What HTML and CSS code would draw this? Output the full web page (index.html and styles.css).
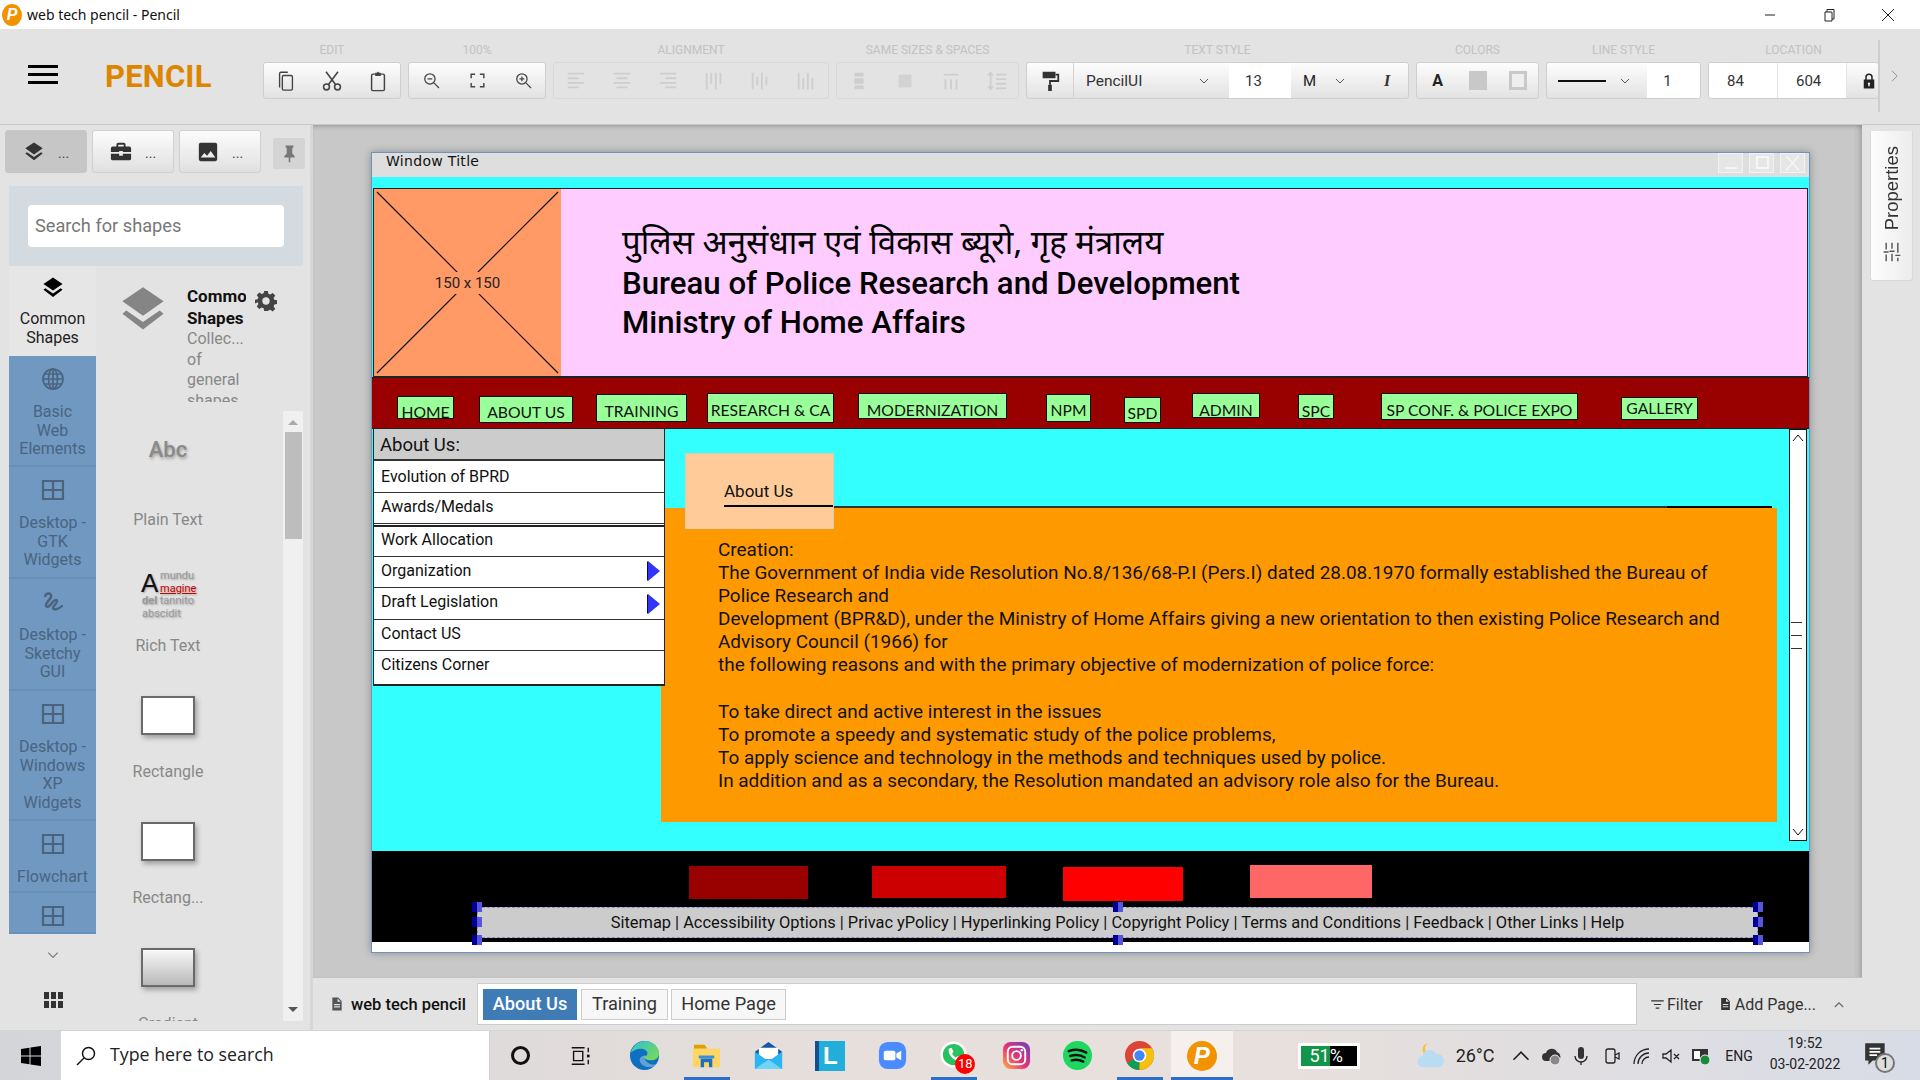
FILE: index.html
```html
<!DOCTYPE html>
<html>
<head>
    <title>web tech pencil - Pencil</title>
    <meta charset="utf-8">
    <link rel="stylesheet" href="styles.css">
</head>
<body>
<svg class="defs" width="0" height="0">
    <symbol id="i-layers" viewBox="0 0 24 24"><path d="M12 14.6 2.5 8 12 1.5 21.5 8z"/><path d="M12 17.5 4.3 12.2 2.5 13.7 12 21 21.5 13.700 19.7 12.2z"/></symbol>
    <symbol id="i-case" viewBox="0 0 24 24"><path d="M9 2h6a2 2 0 0 1 2 2v2h4a2 2 0 0 1 2 2v4H14v-1h-4v1H1V8a2 2 0 0 1 2-2h4V4a2 2 0 0 1 2-2zm0 2v2h6V4zM1 14h9v2h4v-2h9v5a2 2 0 0 1-2 2H3a2 2 0 0 1-2-2z"/></symbol>
    <symbol id="i-image" viewBox="0 0 24 24"><path d="M4 2h16a2 2 0 0 1 2 2v16a2 2 0 0 1-2 2H4a2 2 0 0 1-2-2V4a2 2 0 0 1 2-2zm0 16h16l-5-7-4 5-3-3z"/></symbol>
    <symbol id="i-pin" viewBox="0 0 24 24"><path d="M7 2h10v2l-1.5 1v7l3 3v2H13v6h-2v-6H5.5v-2l3-3V5L7 4z"/></symbol>
    <symbol id="i-globe" viewBox="0 0 24 24"><g fill="none" stroke="currentColor" stroke-width="1.7"><circle cx="12" cy="12" r="10"/><ellipse cx="12" cy="12" rx="4.5" ry="10"/><path d="M12 2v20M2 12h20M3.5 7h17M3.5 17h17"/></g></symbol>
    <symbol id="i-grid" viewBox="0 0 24 24"><path fill="none" stroke="currentColor" stroke-width="2.2" d="M2 3h20v18H2zM12 3v18M2 12h20"/></symbol>
    <symbol id="i-squig" viewBox="0 0 24 24"><path fill="none" stroke="currentColor" stroke-width="2.4" stroke-linecap="round" d="M4 6c2-4 7-3 6 1-1 3-6 6-5 9 1 2 4 0 6-3 2-3 5-4 5-2 0 3-4 5-4 7 0 2 5 2 9-2"/></symbol>
    <symbol id="i-gear" viewBox="0 0 24 24"><path fill-rule="evenodd" d="M10 1h4l.6 3.2 2 .8L19.300 3.200l2.800 2.800-1.800 2.700.8 2 3.100.6v4l-3.100.6-.8 2 1.800 2.700-2.800 2.800-2.700-1.800-2 .8L14 23h-4l-.6-3.200-2-.8-2.700 1.800-2.800-2.800 1.800-2.700-.8-2L0 14.700v-4l2.900-.6.800-2L1.900 5.400 4.700 2.600l2.700 1.800 2-.8zM12 8a4 4 0 1 0 0 8 4 4 0 0 0 0-8z"/></symbol>
    <symbol id="i-copy" viewBox="0 0 24 24"><g fill="none" stroke="currentColor" stroke-width="1.5"><path d="M5 19V4a1.500 1.500 0 0 1 1.500-1.500H14"/><rect x="8" y="6" width="11" height="16" rx="1.5"/></g></symbol>
    <symbol id="i-cut" viewBox="0 0 24 24"><g fill="none" stroke="currentColor" stroke-width="1.7"><circle cx="6" cy="18.500" r="3.200"/><circle cx="18" cy="18.500" r="3.200"/><path d="M8 16 18.500 2M16 16 5.500 2"/></g></symbol>
    <symbol id="i-paste" viewBox="0 0 24 24"><g fill="none" stroke="currentColor" stroke-width="1.6"><rect x="5" y="4.500" width="14" height="18" rx="1.500"/></g><path d="M9 3h2a1 1 0 0 1 2 0h2v3.500H9z"/></symbol>
    <symbol id="i-zoomout" viewBox="0 0 24 24"><g fill="none" stroke="currentColor" stroke-width="1.6"><circle cx="10" cy="10" r="6.500"/><path d="M15 15l6.500 6.500M7 10h6"/></g></symbol>
    <symbol id="i-zoomin" viewBox="0 0 24 24"><g fill="none" stroke="currentColor" stroke-width="1.6"><circle cx="10" cy="10" r="6.500"/><path d="M15 15l6.500 6.500M7 10h6M10 7v6"/></g></symbol>
    <symbol id="i-fit" viewBox="0 0 24 24"><path fill="none" stroke="currentColor" stroke-width="1.8" d="M4 9V4h5M15 4h5v5M20 15v5h-5M9 20H4v-5"/></symbol>
    <symbol id="i-al" viewBox="0 0 24 24"><path fill="none" stroke="currentColor" stroke-width="2" d="M3 4h18M3 9h12M3 14h18M3 19h12"/></symbol>
    <symbol id="i-ac" viewBox="0 0 24 24"><path fill="none" stroke="currentColor" stroke-width="2" d="M3 4h18M6 9h12M3 14h18M6 19h12"/></symbol>
    <symbol id="i-ar" viewBox="0 0 24 24"><path fill="none" stroke="currentColor" stroke-width="2" d="M3 4h18M9 9h12M3 14h18M9 19h12"/></symbol>
    <symbol id="i-vt" viewBox="0 0 24 24"><path fill="none" stroke="currentColor" stroke-width="2" d="M4 3v18M9 3v12M14 3v18M19 3v12"/></symbol>
    <symbol id="i-vm" viewBox="0 0 24 24"><path fill="none" stroke="currentColor" stroke-width="2" d="M4 3v18M9 7v10M14 3v18M19 7v10"/></symbol>
    <symbol id="i-vb" viewBox="0 0 24 24"><path fill="none" stroke="currentColor" stroke-width="2" d="M4 3v18M9 9v12M14 3v18M19 9v12"/></symbol>
    <symbol id="i-sw" viewBox="0 0 24 24"><path d="M7 3h10v4H7zM7 9h10v6H7zM7 17h10v4H7z"/></symbol>
    <symbol id="i-sh" viewBox="0 0 24 24"><path d="M5 5h14v14H5z" opacity=".8"/></symbol>
    <symbol id="i-dw" viewBox="0 0 24 24"><path fill="none" stroke="currentColor" stroke-width="2" d="M4 5h16M6 10v11M12 10v11M18 10v11"/></symbol>
    <symbol id="i-ls" viewBox="0 0 24 24"><path fill="none" stroke="currentColor" stroke-width="2" d="M11 5h11M11 10h11M11 15h11M11 20h11M5 3v18M2.500 6 5 3l2.500 3M2.500 18 5 21l2.500-3"/></symbol>
    <symbol id="i-roller" viewBox="0 0 24 24"><path d="M4 2h14v7H4z"/><path fill="none" stroke="currentColor" stroke-width="2" d="M18 5h3v7h-9v4"/><path d="M10 16h4v7h-4z"/></symbol>
    <symbol id="i-lock" viewBox="0 0 24 24"><path fill="none" stroke="currentColor" stroke-width="2" d="M8 11V7a4 4 0 0 1 8 0v4"/><path fill-rule="evenodd" d="M5 10h14v12H5zM12 14a1.500 1.500 0 0 0-1 2.700V19h2v-2.300A1.500 1.500 0 0 0 12 14z"/></symbol>
    <symbol id="i-chev" viewBox="0 0 24 24"><path fill="none" stroke="currentColor" stroke-width="2" d="M4 8l8 8 8-8"/></symbol>
    <symbol id="i-doc" viewBox="0 0 24 24"><path fill-rule="evenodd" d="M4 1h10l6 6v16H4zM7 12v2h10v-2zM7 16v2h10v-2zM13 2.500V8h5.500z"/></symbol>
    <symbol id="i-sliders" viewBox="0 0 24 24"><path fill="none" stroke="currentColor" stroke-width="1.7" d="M2 12h6M5 15v8M12 1v7M9 11h6M12 14v9M19 1v12M16 16h6M19 19v4M5 1v8"/></symbol>
</svg>

<div class="titlebar">
    <span class="logo logo-small">P</span>
    <span class="titlebar-text">web tech pencil - Pencil</span>
    <div class="win-ctrls">
        <svg viewBox="0 0 14 14"><path d="M2 7h10"/></svg>
        <svg viewBox="0 0 14 14"><path d="M3 4h7v9H3zM5 4V1.500h7V11h-2"/></svg>
        <svg viewBox="0 0 14 14"><path d="M1 1l12 12M13 1 1 13"/></svg>
    </div>
</div>

<div class="toolbar">
    <div class="brand">
        <div class="burger"><i></i><i></i><i></i></div>
        <div class="brand-name">PENCIL</div>
    </div>
    <div class="tb-group w-edit">
        <div class="tb-label">EDIT</div>
        <div class="tb-box">
            <svg class="tool"><use href="#i-copy"/></svg>
            <svg class="tool"><use href="#i-cut"/></svg>
            <svg class="tool"><use href="#i-paste"/></svg>
        </div>
    </div>
    <div class="tb-group w-edit">
        <div class="tb-label">100%</div>
        <div class="tb-box wide-gap">
            <svg class="tool small"><use href="#i-zoomout"/></svg>
            <svg class="tool small"><use href="#i-fit"/></svg>
            <svg class="tool small"><use href="#i-zoomin"/></svg>
        </div>
    </div>
    <div class="tb-group w-align">
        <div class="tb-label">ALIGNMENT</div>
        <div class="tb-box off">
            <svg class="tool"><use href="#i-al"/></svg>
            <svg class="tool"><use href="#i-ac"/></svg>
            <svg class="tool"><use href="#i-ar"/></svg>
            <svg class="tool"><use href="#i-vt"/></svg>
            <svg class="tool"><use href="#i-vm"/></svg>
            <svg class="tool"><use href="#i-vb"/></svg>
        </div>
    </div>
    <div class="tb-group w-same">
        <div class="tb-label">SAME SIZES &amp; SPACES</div>
        <div class="tb-box off">
            <svg class="tool"><use href="#i-sw"/></svg>
            <svg class="tool"><use href="#i-sh"/></svg>
            <svg class="tool"><use href="#i-dw"/></svg>
            <svg class="tool"><use href="#i-ls"/></svg>
        </div>
    </div>
    <div class="tb-group w-text">
        <div class="tb-label">TEXT STYLE</div>
        <div class="tb-box row">
            <div class="cell roller"><svg class="tool"><use href="#i-roller"/></svg></div>
            <div class="cell font-sel">PencilUI<svg class="chev"><use href="#i-chev"/></svg></div>
            <div class="field size-field">13</div>
            <div class="cell weight">M<svg class="chev"><use href="#i-chev"/></svg></div>
            <div class="cell italic">I</div>
        </div>
    </div>
    <div class="tb-group w-color">
        <div class="tb-label">COLORS</div>
        <div class="tb-box color-box">
            <b class="color-a">A</b>
            <span class="swatch-fill"></span>
            <span class="swatch-line"></span>
        </div>
    </div>
    <div class="tb-group w-line">
        <div class="tb-label">LINE STYLE</div>
        <div class="tb-box row">
            <div class="cell line-sel"><span class="line-sample"></span><svg class="chev"><use href="#i-chev"/></svg></div>
            <div class="field line-field">1</div>
        </div>
    </div>
    <div class="tb-group w-loc">
        <div class="tb-label">LOCATION</div>
        <div class="tb-box row">
            <div class="field loc-field">84</div>
            <div class="field loc-field">604</div>
            <div class="cell lock"><svg class="lock-icon"><use href="#i-lock"/></svg></div>
        </div>
    </div>
    <span class="tb-edge"></span>
    <svg class="tb-more" viewBox="0 0 10 16"><path d="M2 2l6 6-6 6"/></svg>
</div>

<div class="work">
    <aside class="sidebar">
        <div class="side-tabs">
            <div class="side-tab active"><svg><use href="#i-layers"/></svg><span>...</span></div>
            <div class="side-tab"><svg><use href="#i-case"/></svg><span>...</span></div>
            <div class="side-tab"><svg><use href="#i-image"/></svg><span>...</span></div>
            <div class="side-pin"><svg><use href="#i-pin"/></svg></div>
        </div>
        <div class="search-box"><div class="search-input">Search for shapes</div></div>
        <div class="lib">
            <div class="lib-cols">
                <div class="col-item current">
                    <svg><use href="#i-layers"/></svg>
                    <div>Common Shapes</div>
                </div>
                <div class="col-blue">
                    <div class="col-item h1"><svg><use href="#i-globe"/></svg><div>Basic<br>Web<br>Elements</div></div>
                    <div class="col-item h1b"><svg><use href="#i-grid"/></svg><div>Desktop -<br>GTK<br>Widgets</div></div>
                    <div class="col-item h1b"><svg><use href="#i-squig"/></svg><div>Desktop -<br>Sketchy<br>GUI</div></div>
                    <div class="col-item h2"><svg><use href="#i-grid"/></svg><div>Desktop -<br>Windows<br>XP<br>Widgets</div></div>
                    <div class="col-item h3"><svg><use href="#i-grid"/></svg><div>Flowchart</div></div>
                    <div class="col-item h4"><svg><use href="#i-grid"/></svg></div>
                </div>
                <svg class="col-chev"><use href="#i-chev"/></svg>
                <div class="col-apps"><i></i><i></i><i></i><i></i><i></i><i></i></div>
            </div>
            <div class="lib-main">
                <div class="lib-head">
                    <svg class="head-icon"><use href="#i-layers"/></svg>
                    <div class="head-text">
                        <div class="head-name">Common Shapes</div>
                        <div class="head-desc">Collec...<br>of<br>general<br>shapes</div>
                    </div>
                    <svg class="head-gear"><use href="#i-gear"/></svg>
                </div>
                <div class="shapes">
                    <div class="shape-list">
                        <div class="shape"><div class="thumb"><span class="abc">Abc</span></div><div class="shape-name">Plain Text</div></div>
                        <div class="shape"><div class="thumb"><div class="rich">
                            <span class="rich-a">A</span>
                            <span class="rich-top">mundu<br><u>magine</u></span>
                            <span class="rich-bottom"><b>del</b> tannito<br>abscidit</span>
                        </div></div><div class="shape-name">Rich Text</div></div>
                        <div class="shape"><div class="thumb"><span class="rect"></span></div><div class="shape-name">Rectangle</div></div>
                        <div class="shape"><div class="thumb"><span class="rect"></span></div><div class="shape-name">Rectang...</div></div>
                        <div class="shape"><div class="thumb"><span class="rect grad"></span></div><div class="shape-name">Gradient</div></div>
                    </div>
                    <div class="vscroll">
                        <span class="arrow-up"></span>
                        <span class="vthumb"></span>
                        <span class="arrow-down"></span>
                    </div>
                </div>
            </div>
        </div>
    </aside>

    <div class="center">
        <div class="canvas">
            <div class="window">
                <div class="win-title">
                    <span>Window Title</span>
                    <div class="win-btns">
                        <span class="wb"><i class="wb-min"></i></span>
                        <span class="wb"><i class="wb-max"></i></span>
                        <span class="wb"><svg viewBox="0 0 20 20"><path d="M3 2l14 16M17 2 3 18"/></svg></span>
                    </div>
                </div>

                <div class="sheet-cyan"></div>

                <div class="ph-box">
                    <svg viewBox="0 0 188 188" preserveAspectRatio="none"><path d="M3 3l182 182M185 3 3 185"/></svg>
                    <span>150 x 150</span>
                </div>
                <div class="banner">
                    <p class="hi">पुलिस अनुसंधान एवं विकास ब्यूरो, गृह मंत्रालय</p>
                    <p>Bureau of Police Research and Development</p>
                    <p>Ministry of Home Affairs</p>
                </div>

                <div class="navband"></div>
                <a class="nb nb-home">HOME</a>
                <a class="nb nb-about">ABOUT US</a>
                <a class="nb nb-train">TRAINING</a>
                <a class="nb nb-res">RESEARCH &amp; CA</a>
                <a class="nb nb-mod">MODERNIZATION</a>
                <a class="nb nb-npm">NPM</a>
                <a class="nb nb-spd">SPD</a>
                <a class="nb nb-admin">ADMIN</a>
                <a class="nb nb-spc">SPC</a>
                <a class="nb nb-conf">SP CONF. &amp; POLICE EXPO</a>
                <a class="nb nb-gal">GALLERY</a>

                <div class="content-panel">
                    <p>Creation:<br>
                    The Government of India vide Resolution No.8/136/68-P.I (Pers.I) dated 28.08.1970 formally established the Bureau of<br>
                    Police Research and<br>
                    Development (BPR&amp;D), under the Ministry of Home Affairs giving a new orientation to then existing Police Research and<br>
                    Advisory Council (1966) for<br>
                    the following reasons and with the primary objective of modernization of police force:<br>
                    <br>
                    To take direct and active interest in the issues<br>
                    To promote a speedy and systematic study of the police problems,<br>
                    To apply science and technology in the methods and techniques used by police.<br>
                    In addition and as a secondary, the Resolution mandated an advisory role also for the Bureau.</p>
                </div>
                <div class="tab-line"></div>
                <div class="tab-line dark"></div>
                <div class="tab-active"><span>About Us</span></div>

                <div class="sidemenu">
                    <div class="sm-head">About Us:</div>
                    <div class="sm-item first">Evolution of BPRD</div>
                    <div class="sm-item">Awards/Medals</div>
                    <div class="sm-item gap">Work Allocation</div>
                    <div class="sm-item">Organization<span class="tri"></span></div>
                    <div class="sm-item">Draft Legislation<span class="tri low"></span></div>
                    <div class="sm-item">Contact US</div>
                    <div class="sm-item">Citizens Corner</div>
                </div>

                <div class="draw-scroll">
                    <svg class="ds-up" viewBox="0 0 12 8"><path d="M1 7l5-6 5 6"/></svg>
                    <div class="ds-grip"><i></i><i></i><i></i></div>
                    <svg class="ds-down" viewBox="0 0 12 8"><path d="M1 1l5 6 5-6"/></svg>
                </div>

                <div class="footer-band"></div>
                <span class="block b1"></span>
                <span class="block b2"></span>
                <span class="block b3"></span>
                <span class="block b4"></span>
                <div class="footer-links">Sitemap | Accessibility Options | Privac yPolicy | Hyperlinking Policy | Copyright Policy | Terms and Conditions | Feedback | Other Links | Help</div>
                <i class="hd hx1 hy1"></i><i class="hd hx1 hy2"></i><i class="hd hx1 hy3"></i>
                <i class="hd hx2 hy1"></i><i class="hd hx2 hy3"></i>
                <i class="hd hx3 hy1"></i><i class="hd hx3 hy2"></i><i class="hd hx3 hy3"></i>
            </div>
        </div>

        <div class="pagebar">
            <svg class="doc-icon"><use href="#i-doc"/></svg>
            <b class="doc-name">web tech pencil</b>
            <div class="page-tabs">
                <span class="ptab on">About Us</span>
                <span class="ptab train">Training</span>
                <span class="ptab home">Home Page</span>
            </div>
            <div class="page-tool filter">
                <svg viewBox="0 0 14 10"><path d="M0 1h14M3 5h8M5 9h4"/></svg>Filter
            </div>
            <div class="page-tool add">
                <svg class="add-icon"><use href="#i-doc"/></svg>Add Page...
            </div>
            <svg class="page-up" viewBox="0 0 12 8"><path d="M1 7l5-5 5 5"/></svg>
        </div>
    </div>

    <div class="props">
        <div class="props-btn">
            <span>Properties</span>
            <svg><use href="#i-sliders"/></svg>
        </div>
    </div>
</div>

<div class="taskbar">
    <div class="start">
        <svg viewBox="0 0 20 20"><path d="M0 3l8.500-1.200V9.500H0zM9.500 1.600 20 0v9.500H9.500zM0 10.500h8.500v7.700L0 17zM9.500 10.500H20V20L9.500 18.400z"/></svg>
    </div>
    <div class="tsearch">
        <svg viewBox="0 0 20 20"><circle cx="12.500" cy="7.500" r="6"/><path d="M8 12l-7 7"/></svg>
        <span>Type here to search</span>
    </div>
    <div class="tcell"><span class="cortana"></span></div>
    <div class="tcell">
        <svg class="ticon taskview" viewBox="0 0 24 24"><path fill="none" stroke="#111" stroke-width="1.500" d="M3 3h14M3 21h14M5 7h10v10H5zM21 3v5M21 16v5"/><path d="M19.500 10.500h3v3h-3z" fill="#111"/></svg>
    </div>
    <div class="tcell">
        <svg class="ticon large" viewBox="0 0 32 32">
            <defs><linearGradient id="eg" x1="0" y1="0" x2="1" y2="1"><stop offset="0" stop-color="#2fc2d8"/><stop offset="1" stop-color="#7fdc4a"/></linearGradient></defs>
            <circle cx="16" cy="16" r="15" fill="#0f6fc0"/>
            <path d="M2 13C4 4 12 1 17 1c8 0 14 6 14 13 0 5-4 7-9 7-4 0-6-2-6-3 0-2 3-1 3-4 0-3-3-5-7-5-4 0-8 2-10 4z" fill="url(#eg)"/>
            <path d="M11 20c0 5 5 8 10 8 3 0 6-1 8-3-4 1-8 0-10-2-3-2-3-5-2-7-3 0-6 2-6 4z" fill="#fff" opacity=".35"/>
        </svg>
    </div>
    <div class="tcell running">
        <svg class="ticon large" viewBox="0 0 32 32"><path d="M3 5h11l3 4H3z" fill="#e0a100"/><path d="M2 9h28v19H2z" fill="#ffd564"/><path d="M10 28v-9h12v9h-3.500v-5h-5v5z" fill="#1f6fc0"/><path d="M8 19h16v-3H8z" fill="#3a8fdd"/></svg>
    </div>
    <div class="tcell">
        <svg class="ticon large" viewBox="0 0 32 32"><path d="M2 12 16 2l14 10v18H2z" fill="#0f5aa8"/><path d="M6 8h20v12H6z" fill="#fff"/><path d="M2 12l14 10 14-10v18H2z" fill="#29b6f0"/><path d="M2 30l14-10 14 10z" fill="#6fd4f7"/></svg>
    </div>
    <div class="tcell">
        <div class="tile-l"><span>L</span></div>
    </div>
    <div class="tcell">
        <svg class="ticon large" viewBox="0 0 32 32"><rect x="2" y="2" width="28" height="28" rx="9" fill="#4a8cff"/><rect x="7" y="11" width="12" height="10" rx="2" fill="#fff"/><path d="M20 14l5-3v10l-5-3z" fill="#fff"/></svg>
    </div>
    <div class="tcell running">
        <svg class="ticon large" viewBox="0 0 32 32"><circle cx="15" cy="15" r="13.500" fill="#fff"/><circle cx="15" cy="15" r="11" fill="#25c25f"/><path d="M10 9l3-1 2 4-1.500 2c1 2 2 3 4 4l2-1.500 3.500 2-1 3c-6 1-13-6-12-12.500z" fill="#fff"/></svg>
        <span class="badge">18</span>
    </div>
    <div class="tcell">
        <svg class="ticon large" viewBox="0 0 32 32">
            <defs><linearGradient id="ig" x1="0" y1="1" x2="1" y2="0"><stop offset="0" stop-color="#fdb54a"/><stop offset=".45" stop-color="#e8336f"/><stop offset="1" stop-color="#6a3fc4"/></linearGradient></defs>
            <rect x="2" y="2" width="28" height="28" rx="8" fill="url(#ig)"/>
            <rect x="7" y="7" width="18" height="18" rx="5" fill="none" stroke="#fff" stroke-width="2"/><circle cx="16" cy="16" r="4.500" fill="none" stroke="#fff" stroke-width="2"/><circle cx="21.500" cy="10.500" r="1.300" fill="#fff"/>
        </svg>
    </div>
    <div class="tcell">
        <svg class="ticon large" viewBox="0 0 32 32"><circle cx="16" cy="16" r="15" fill="#1ed760"/><path d="M7 11.500c6-2 13-1.500 18 1.500M8.500 16.500c5-1.500 11-1 15 1.500M10 21c4-1 8-.8 12 1.300" fill="none" stroke="#111" stroke-width="2.500" stroke-linecap="round"/></svg>
    </div>
    <div class="tcell running">
        <svg class="ticon large" viewBox="0 0 32 32"><circle cx="16" cy="16" r="15" fill="#db4437"/><path d="M16 16 3 23.500A15 15 0 0 0 16 31z" fill="#0f9d58"/><path d="M16 16 16 31A15 15 0 0 0 29 8.500H16z" fill="#f4c20d"/><path d="M3 23.500 16 16V8.500H3z" fill="#db4437"/><circle cx="16" cy="16" r="7" fill="#fff"/><circle cx="16" cy="16" r="5.300" fill="#4285f4"/></svg>
    </div>
    <div class="tcell running current-app"><span class="logo">P</span></div>

    <div class="meter"><span class="meter-fill">51</span><span class="meter-rest">%</span></div>
    <svg class="weather" viewBox="0 0 32 32"><path d="M13 2a8 8 0 0 0 2 14 8 8 0 0 1-8-6 8 8 0 0 1 6-8z" fill="#f4c430"/><path d="M8 28a6 6 0 0 1-1-12 8 8 0 0 1 15-2 7 7 0 0 1 2 14z" fill="#b9dcf2"/></svg>
    <span class="temp">26°C</span>

    <div class="tray">
        <span class="tray-cell"><svg viewBox="0 0 16 16"><path d="M2 11l6-6 6 6"/></svg></span>
        <span class="tray-cell"><svg viewBox="0 0 20 20"><path class="solid" d="M5 15a4 4 0 0 1 0-8 6 6 0 0 1 11-1 5 5 0 0 1 1 9z"/><circle class="solid grey" cx="14" cy="14" r="5"/></svg></span>
        <span class="tray-cell"><svg viewBox="0 0 20 20"><rect class="solid" x="7" y="1" width="6" height="12" rx="3"/><path d="M4 10a6 6 0 0 0 12 0M10 16v3"/></svg></span>
        <span class="tray-cell"><svg viewBox="0 0 20 20"><rect x="5" y="3" width="9" height="14" rx="2"/><path d="M14 9l4-2v6l-4-2"/></svg></span>
        <span class="tray-cell"><svg viewBox="0 0 20 20"><path d="M3 18a15 15 0 0 1 15-15M7 18a11 11 0 0 1 11-11M11 18a7 7 0 0 1 7-7"/></svg></span>
        <span class="tray-cell"><svg viewBox="0 0 20 20"><path d="M2 8h3l5-4v12l-5-4H2zM13 8l5 5M18 8l-5 5"/></svg></span>
        <span class="tray-cell"><svg viewBox="0 0 20 20"><rect class="solid" x="1" y="3" width="16" height="12"/><rect class="white" x="3" y="5" width="6" height="8"/><circle class="solid green" cx="14" cy="14" r="5"/></svg></span>
        <span class="lang">ENG</span>
        <div class="clock">19:52<br>03-02-2022</div>
        <span class="notif"><svg viewBox="0 0 24 24"><path class="solid" d="M2 2h18v16H9l-4 4v-4H2z"/><path class="white-line" d="M6 7h10M6 10h10M6 13h7"/></svg><i>1</i></span>
    </div>
</div>
</body>
</html>
```
FILE: styles.css
```css
* { box-sizing: border-box; }

html, body {
    margin: 0;
    height: 1080px;
    overflow: hidden;
}

body {
    display: flex;
    flex-direction: column;
    font-family: Roboto, "Liberation Sans", sans-serif;
    color: #111;
    background: #e3e3e3;
}

.defs { position: absolute; }

/* title bar */
.titlebar {
    height: 29px;
    flex: none;
    display: flex;
    align-items: center;
    padding-left: 2px;
    background: #fff;
}
.logo {
    width: 30px;
    height: 30px;
    border-radius: 50%;
    background: #f39200;
    color: #fff;
    font: italic bold 24px/30px "Liberation Sans", sans-serif;
    text-align: center;
    display: inline-block;
}
.logo-small {
    width: 20px;
    height: 22px;
    font-size: 16px;
    line-height: 22px;
    flex: none;
}
.titlebar-text {
    margin-left: 5px;
    font: 14px "Noto Sans", sans-serif;
    color: #111;
}
.win-ctrls {
    margin-left: auto;
    display: flex;
    gap: 45px;
    padding-right: 25px;
}
.win-ctrls svg {
    width: 14px;
    height: 14px;
    fill: none;
    stroke: #222;
    stroke-width: 1;
}

/* tool bar */
.toolbar {
    height: 96px;
    flex: none;
    display: flex;
    gap: 7px;
    background: #e3e3e3;
    border-bottom: 1px solid #c9c9c9;
    position: relative;
}
.brand {
    width: 256px;
    display: flex;
    align-items: center;
    padding: 0 0 0 28px;
}
.burger { width: 30px; }
.burger i {
    display: block;
    height: 3px;
    background: #000;
    margin-bottom: 5px;
}
.brand-name {
    margin-left: 47px;
    font: bold 31px "Roboto", sans-serif;
    color: #de8500;
    margin-top: -1px;
    letter-spacing: 0.2px;
}
.tb-group { padding-top: 14px; }
.w-edit { width: 138px; }
.w-align { width: 276px; }
.w-same { width: 183px; }
.w-text { width: 383px; }
.w-color { width: 123px; }
.w-line { width: 155px; }
.w-loc { width: 171px; }
.tb-label {
    height: 19px;
    text-align: center;
    font-size: 12px;
    line-height: 14px;
    color: #c2c2c2;
    white-space: nowrap;
}
.tb-box {
    height: 37px;
    display: flex;
    align-items: center;
    justify-content: center;
    gap: 24px;
    border: 1px solid #cfcfcf;
    border-radius: 3px;
    background: linear-gradient(#fdfdfd, #e2e2e2);
    color: #444;
}
.tb-box.wide-gap { gap: 27px; }
.tb-box.off {
    background: #e3e3e3;
    border-color: #d8d8d8;
    color: #cecece;
}
.tb-box.row {
    justify-content: flex-start;
    gap: 0;
    overflow: hidden;
}
.tool {
    width: 22px;
    height: 22px;
    fill: currentColor;
    flex: none;
}
.tool.small { width: 19px; height: 19px; }
.cell {
    height: 100%;
    display: flex;
    align-items: center;
}
.roller {
    width: 47px;
    justify-content: center;
    border-right: 1px solid #d2d2d2;
    color: #333;
}
.font-sel {
    width: 155px;
    padding-left: 12px;
    font-size: 15.5px;
    color: #333;
}
.chev {
    width: 12px;
    height: 12px;
    fill: #555;
    color: #555;
    flex: none;
}
.font-sel .chev { margin-left: auto; margin-right: 19px; }
.field {
    height: 100%;
    background: #fff;
    font-size: 15px;
    color: #333;
    display: flex;
    align-items: center;
}
.size-field { width: 62px; padding-left: 16px; }
.weight { width: 68px; padding-left: 12px; font-size: 15px; color: #222; }
.weight .chev { margin-left: 18px; }
.italic {
    font: italic bold 16px "Liberation Serif", serif;
    color: #333;
    padding-left: 25px;
}
.color-box { gap: 22px; }
.color-a { width: 18px; text-align: center; font-size: 16px; color: #222; }
.swatch-fill { width: 18px; height: 19px; background: #c8c8c8; }
.swatch-line { width: 18px; height: 19px; border: 3px solid #c8c8c8; background: #eee; }
.line-sel { width: 101px; padding-left: 11px; }
.line-sample { width: 48px; height: 2px; background: #111; }
.line-sel .chev { margin-left: 13px; }
.line-field { width: 53px; padding-left: 16px; }
.loc-field { width: 70px; padding-left: 18px; border-right: 1px solid #e4e4e4; }
.lock { flex: 1; padding-left: 13px; }
.lock-icon { width: 18px; height: 22px; color: #222; fill: #222; }
.tb-edge {
    position: absolute;
    left: 1878px;
    top: 11px;
    width: 2px;
    height: 72px;
    background: #cdcdcd;
}
.tb-more {
    position: absolute;
    right: 21px;
    top: 40px;
    width: 9px;
    height: 14px;
    fill: none;
    stroke: #888;
    stroke-width: 1;
}

/* main area */
.work {
    flex: 1;
    display: flex;
    min-height: 0;
}
.sidebar {
    width: 313px;
    flex: none;
    background: #e3e3e3;
    display: flex;
    flex-direction: column;
    padding-top: 5px;
    box-shadow: inset -3px 0 0 #d7d7d7;
}
.side-tabs {
    display: flex;
    gap: 5px;
    padding-left: 5px;
    height: 43px;
}
.side-tab {
    width: 82px;
    border: 1px solid #d0d0d0;
    border-radius: 3px;
    background: linear-gradient(#fcfcfc, #e0e0e0);
    display: flex;
    align-items: center;
    padding-left: 17px;
}
.side-tab.active {
    background: #c6c6c6;
    border-color: #c6c6c6;
}
.side-tab svg { width: 22px; height: 22px; fill: #333; }
.side-tab span {
    margin-left: 13px;
    margin-top: 2px;
    font-size: 14px;
    color: #444;
}
.side-pin {
    width: 32px;
    height: 31px;
    margin: 8px 0 0 7px;
    background: #d4d4d4;
    border-radius: 2px;
    display: flex;
    align-items: center;
    justify-content: center;
}
.side-pin svg { width: 19px; height: 19px; fill: #777; }
.search-box {
    margin: 13px 10px 0 9px;
    height: 80px;
    padding: 19px;
    background: #d3dbe0;
}
.search-input {
    height: 42px;
    background: #fff;
    border-radius: 4px;
    padding-left: 7px;
    font-size: 18.2px;
    line-height: 42px;
    color: #777;
}
.lib {
    flex: 1;
    display: flex;
    min-height: 0;
}
.lib-cols {
    width: 87px;
    margin-left: 9px;
    text-align: center;
    font-size: 16px;
    line-height: 18.5px;
}
.col-item {
    padding-top: 11px;
    color: #4a6480;
    box-shadow: inset 0 -2px 0 #6890b8;
}
.col-item svg {
    display: block;
    width: 24px;
    height: 24px;
    margin: 0 auto 12px;
    fill: currentColor;
}
.col-item.current {
    height: 90px;
    padding-top: 10px;
    color: #222;
    box-shadow: none;
    background: #e6e6e6;
    line-height: 19px;
}
.col-item.current svg { fill: #000; margin-bottom: 9px; }
.col-blue { background: #7098c0; }
.h1 { height: 111px; }
.h1b { height: 112px; }
.h2 { height: 130px; }
.h3 { height: 72px; }
.h4 { height: 41px; overflow: hidden; }
.col-chev {
    display: block;
    width: 16px;
    height: 14px;
    margin: 14px auto 0;
    color: #777;
    fill: #777;
}
.col-apps {
    width: 19px;
    margin: 30px 0 0 35px;
    display: grid;
    grid-template-columns: repeat(3, 5px);
    gap: 2px;
}
.col-apps i { height: 7px; background: #333; }
.lib-main {
    width: 207px;
    display: flex;
    flex-direction: column;
    min-height: 0;
}
.lib-head {
    height: 136px;
    position: relative;
    display: flex;
    padding: 18px 0 0 21px;
    flex: none;
}
.head-icon { width: 52px; height: 52px; fill: #858585; flex: none; }
.head-text {
    width: 59px;
    height: 117px;
    margin: 1px 0 0 18px;
    overflow: hidden;
}
.head-name {
    font-weight: bold;
    font-size: 17px;
    line-height: 22px;
    color: #111;
    word-break: keep-all;
}
.head-desc {
    font-size: 16px;
    line-height: 20.5px;
    color: #888;
}
.head-gear {
    position: absolute;
    left: 159px;
    top: 24px;
    width: 22px;
    height: 22px;
    fill: #444;
}
.shapes {
    height: 610px;
    margin-top: 9px;
    display: flex;
    overflow: hidden;
}
.shape-list { width: 187px; flex: none; }
.shape { width: 144px; height: 126px; }
.shape:first-child { margin-top: 9px; }
.thumb {
    height: 86px;
    display: flex;
    align-items: center;
    justify-content: center;
}
.shape-name {
    height: 28px;
    text-align: center;
    font-size: 16px;
    line-height: 28px;
    color: #888;
}
.abc {
    font-size: 22px;
    font-weight: 500;
    color: #8a8a8a;
    text-shadow: 1px 2px 3px rgba(0, 0, 0, 0.3);
    margin-top: -28px;
}
.rich {
    width: 54px;
    height: 50px;
    margin-top: 12px;
    position: relative;
    font-size: 11px;
    line-height: 12.5px;
    color: #999;
    text-shadow: 1px 1px 2px rgba(0, 0, 0, 0.3);
}
.rich-a {
    position: absolute;
    left: 0;
    top: 0;
    font: 26px/26px "Liberation Sans", sans-serif;
    color: #111;
}
.rich-top { position: absolute; left: 19px; top: 0; }
.rich-top u { color: #c00; }
.rich-bottom { position: absolute; left: 1px; top: 25px; white-space: nowrap; }
.rect {
    width: 54px;
    height: 39px;
    background: #fff;
    border: 2px solid #6a6a6a;
    box-shadow: 2px 3px 5px rgba(0, 0, 0, 0.3);
}
.rect.grad { background: linear-gradient(#f8f8f8, #b8b8b8); }
.vscroll {
    width: 20px;
    background: #f0f0f0;
    position: relative;
    height: 610px;
}
.vthumb {
    position: absolute;
    left: 2px;
    top: 21px;
    width: 17px;
    height: 107px;
    background: #bdbdbd;
}
.arrow-up, .arrow-down {
    position: absolute;
    left: 5px;
    width: 0;
    height: 0;
    border-left: 5px solid transparent;
    border-right: 5px solid transparent;
}
.arrow-up { top: 9px; border-bottom: 5px solid #aaa; }
.arrow-down { bottom: 9px; border-top: 5px solid #555; }

/* drawing area */
.center {
    flex: 1;
    display: flex;
    flex-direction: column;
    min-width: 0;
}
.canvas {
    flex: 1;
    position: relative;
    background: #c8c8c8;
    box-shadow: inset 0 4px 5px -3px rgba(0, 0, 0, 0.25), inset -7px 0 6px -5px rgba(0, 0, 0, 0.2);
}
.window {
    position: absolute;
    left: 58px;
    top: 27px;
    width: 1439px;
    height: 801px;
    background: #fff;
    border: 1px solid #6d94bd;
    box-shadow: 0 0 8px rgba(0, 0, 0, 0.3);
}
.win-title {
    height: 24px;
    background: #dedede;
    padding-left: 14px;
    font: 14px/16px "DejaVu Sans", sans-serif;
    letter-spacing: 0.3px;
    position: relative;
}
.win-btns {
    position: absolute;
    right: 4px;
    top: 0;
    display: flex;
    gap: 6px;
}
.wb {
    width: 25px;
    height: 20px;
    background: #e6e6e6;
    border: 1px solid #f2f2f2;
    position: relative;
    display: block;
}
.wb-min {
    position: absolute;
    left: 6px;
    bottom: 3px;
    width: 12px;
    height: 2px;
    background: #f6f6f6;
}
.wb-max {
    position: absolute;
    left: 6px;
    top: 2px;
    width: 13px;
    height: 13px;
    border: 2px solid #f6f6f6;
}
.wb svg { width: 100%; height: 100%; fill: none; stroke: #f6f6f6; stroke-width: 1.5; display: block; }

.sheet-cyan {
    position: absolute;
    left: 0;
    top: 24px;
    width: 1437px;
    height: 674px;
    background: #33ffff;
}
.ph-box {
    position: absolute;
    left: 1px;
    top: 35px;
    width: 189px;
    height: 189px;
    background: #ff9966;
    border: 1px solid #222;
    display: flex;
    align-items: center;
    justify-content: center;
    font-size: 15px;
    color: #222;
}
.ph-box svg {
    position: absolute;
    inset: 0;
    width: 100%;
    height: 100%;
    fill: none;
    stroke: #111;
    stroke-width: 1.2;
}
.ph-box span {
    position: relative;
    background: #ff9966;
    padding: 2px 0;
}
.banner {
    position: absolute;
    left: 189px;
    top: 35px;
    width: 1247px;
    height: 189px;
    background: #ffccff;
    border: 1px solid #222;
    border-left: 0;
    padding: 37px 0 0 61px;
    color: #000;
}
.banner p {
    margin: 0;
    font-size: 31.2px;
    font-weight: 500;
    line-height: 38.5px;
    white-space: nowrap;
}
.banner .hi {
    font-family: "Noto Sans Devanagari", "Lohit Devanagari", "Noto Sans", sans-serif;
    font-weight: 400;
    font-size: 33px;
    line-height: 39px;
}
.navband {
    position: absolute;
    left: 0;
    top: 224px;
    width: 1437px;
    height: 52px;
    background: #990000;
    border-top: 1px solid #222;
    border-bottom: 1px solid #222;
}

/* nav buttons sit where they were dragged on the mockup */
.nb {
    position: absolute;
    background: #99ff99;
    border: 1px solid #111;
    font: 15.7px Lato, sans-serif;
    color: #111;
    text-align: center;
    white-space: nowrap;
}
.nb-home { left: 25px; top: 243px; width: 57px; height: 23px; line-height: 31px; }
.nb-about { left: 107px; top: 243px; width: 94px; height: 27px; line-height: 31px; }
.nb-train { left: 224px; top: 241px; width: 91px; height: 28px; line-height: 33px; }
.nb-res { left: 335px; top: 240px; width: 127px; height: 30px; line-height: 33px; }
.nb-mod { left: 486px; top: 240px; width: 149px; height: 26px; line-height: 33px; }
.nb-npm { left: 674px; top: 241px; width: 45px; height: 28px; line-height: 31px; }
.nb-spd { left: 752px; top: 244px; width: 37px; height: 26px; line-height: 31px; }
.nb-admin { left: 820px; top: 240px; width: 68px; height: 25px; line-height: 33px; }
.nb-spc { left: 926px; top: 241px; width: 36px; height: 25px; line-height: 33px; }
.nb-conf { left: 1009px; top: 240px; width: 197px; height: 27px; line-height: 33px; }
.nb-gal { left: 1249px; top: 244px; width: 77px; height: 23px; line-height: 20px; }

.content-panel {
    position: absolute;
    left: 289px;
    top: 355px;
    width: 1116px;
    height: 314px;
    background: #ff9900;
    padding: 30px 0 0 57px;
    font-size: 18.95px;
    line-height: 23.1px;
    color: #111;
    white-space: nowrap;
}
.content-panel p { margin: 0; }
.tab-line {
    position: absolute;
    left: 352px;
    top: 353px;
    width: 1048px;
    height: 2px;
    background: #333;
}
.tab-line.dark { left: 1295px; width: 105px; background: #000; }
.tab-active {
    position: absolute;
    left: 313px;
    top: 300px;
    width: 149px;
    height: 76px;
    background: #ffcc99;
    border: 1px solid #d8cdb4;
    padding: 27px 0 0 38px;
    font-size: 17px;
    line-height: 20px;
}
.tab-active span {
    display: block;
    width: 109px;
    height: 26px;
    border-bottom: 2px solid #000;
}
.sidemenu {
    position: absolute;
    left: 1px;
    top: 276px;
    width: 292px;
    background: #fff;
    border: 1px solid #222;
    border-top: 0;
    border-bottom-width: 2px;
    padding-bottom: 1px;
}
.sm-head {
    height: 32px;
    background: #ccc;
    border-bottom: 2px solid #333;
    padding-left: 6px;
    font-size: 18.5px;
    line-height: 32px;
    color: #111;
}
.sm-item {
    height: 31.5px;
    border-bottom: 1px solid #333;
    padding-left: 7px;
    font-size: 16px;
    line-height: 28px;
    position: relative;
    color: #111;
}
.sm-item.first { line-height: 31px; }
.sm-item:last-child { border-bottom: 0; }
.sm-item.gap { border-top: 2px solid #222; margin-top: 1px; line-height: 26px; }
.tri {
    position: absolute;
    right: 4px;
    top: 4px;
    width: 0;
    height: 0;
    border-left: 12px solid #3333ff;
    border-top: 10px solid transparent;
    border-bottom: 10px solid transparent;
    filter: drop-shadow(-1px 0 0 #111);
}
.tri.low { top: 6px; }
.draw-scroll {
    position: absolute;
    left: 1417px;
    top: 276px;
    width: 18px;
    height: 412px;
    background: #fff;
    border: 1px solid #111;
}
.draw-scroll svg {
    position: absolute;
    left: 2px;
    width: 12px;
    height: 8px;
    fill: none;
    stroke: #111;
    stroke-width: 1;
}
.ds-up { top: 4px; }
.ds-down { bottom: 4px; }
.ds-grip {
    position: absolute;
    left: 1px;
    top: 192px;
    width: 11px;
}
.ds-grip i {
    display: block;
    height: 1px;
    background: #333;
    margin-bottom: 12px;
}
.footer-band {
    position: absolute;
    left: 0;
    top: 698px;
    width: 1437px;
    height: 91px;
    background: #000;
}
.block { position: absolute; display: block; }
.b1 { left: 317px; top: 713px; width: 119px; height: 33px; background: #990000; }
.b2 { left: 500px; top: 713px; width: 134px; height: 32px; background: #cc0000; }
.b3 { left: 691px; top: 714px; width: 120px; height: 34px; background: #ff0000; }
.b4 { left: 878px; top: 712px; width: 122px; height: 33px; background: #ff6666; }
.footer-links {
    position: absolute;
    left: 105px;
    top: 754px;
    width: 1281px;
    height: 31px;
    background: #ccc;
    border: 1px dashed #8a8ad8;
    font-size: 16.4px;
    line-height: 29px;
    text-align: center;
    color: #111;
    white-space: nowrap;
}
.hd {
    position: absolute;
    width: 10px;
    height: 10px;
    background: linear-gradient(90deg, #000099 50%, #5555dd 50%);
}
.hx1 { left: 100px; }
.hx2 { left: 741px; }
.hx3 { left: 1381px; }
.hy1 { top: 749px; }
.hy2 { top: 764px; }
.hy3 { top: 782px; }

/* page tabs */
.pagebar {
    height: 53px;
    flex: none;
    display: flex;
    align-items: center;
    background: #e3e3e3;
    border-top: 1px solid #c4c4c4;
    padding-left: 17px;
    font-size: 16px;
    position: relative;
}
.doc-icon { width: 14px; height: 14px; fill: #555; flex: none; }
.doc-name { margin-left: 7px; font-size: 16.5px; width: 126px; white-space: nowrap; font-weight: 500; }
.page-tabs {
    width: 1160px;
    height: 42px;
    background: #fff;
    border: 1px solid #ccc;
    display: flex;
    align-items: center;
    padding-left: 5px;
    gap: 4px;
    flex: none;
}
.ptab {
    height: 31px;
    background: #f7f7f7;
    border: 1px solid #ccc;
    font-size: 18.2px;
    line-height: 27px;
    text-align: center;
    color: #333;
}
.ptab.on {
    background: #3f7cb5;
    border-color: #3f7cb5;
    color: #fff;
    font-weight: 500;
    width: 94px;
}
.ptab.train { width: 87px; }
.ptab.home { width: 115px; margin-left: -1px; }
.page-tool {
    display: flex;
    align-items: center;
    font-size: 16px;
    color: #333;
    white-space: nowrap;
}
.filter { margin-left: 14px; }
.filter svg { width: 13px; height: 9px; fill: none; stroke: #333; stroke-width: 1.3; margin-right: 3px; }
.add { margin-left: 16px; }
.add-icon { width: 13px; height: 14px; fill: #333; margin-right: 3px; }
.page-up {
    margin-left: 18px;
    width: 10px;
    height: 7px;
    fill: none;
    stroke: #666;
    stroke-width: 1.3;
}
.props {
    width: 58px;
    flex: none;
    background: #e3e3e3;
    padding: 6px 0 0 8px;
}
.props-btn {
    width: 43px;
    height: 150px;
    background: linear-gradient(90deg, #fdfdfd, #ececec);
    border: 1px solid #d9d9d9;
    border-top: 0;
    border-radius: 0 0 3px 3px;
    display: flex;
    flex-direction: column;
    align-items: center;
    padding-top: 15px;
}
.props-btn span {
    writing-mode: vertical-rl;
    transform: rotate(180deg);
    font: 18.5px "Liberation Sans", sans-serif;
    color: #333;
}
.props-btn svg {
    width: 20px;
    height: 20px;
    margin-top: 12px;
    color: #555;
}

/* windows task bar */
.taskbar {
    height: 50px;
    flex: none;
    display: flex;
    align-items: center;
    background: linear-gradient(90deg, #d3d5d9 0%, #e7dfdb 45%, #e8e0dc 65%, #d8dce6 100%);
    border-top: 1px solid #d4d4d4;
    position: relative;
}
.start {
    width: 61px;
    flex: none;
    display: flex;
    justify-content: center;
}
.start svg { width: 20px; height: 20px; fill: #000; }
.tsearch {
    width: 429px;
    height: 49px;
    flex: none;
    background: #fff;
    display: flex;
    align-items: center;
    padding: 0 0 3px 15px;
    border-right: 1px solid #d0d0d0;
    font: 17.8px "Open Sans", sans-serif;
    color: #222;
}
.tsearch svg {
    width: 20px;
    height: 20px;
    fill: none;
    stroke: #111;
    stroke-width: 1.5;
    margin: 3px 14px 0 0;
}
.tcell {
    width: 61.9px;
    height: 49px;
    flex: none;
    display: flex;
    align-items: center;
    justify-content: center;
    position: relative;
}
.tcell.running::after {
    content: "";
    position: absolute;
    left: 8px;
    right: 8px;
    bottom: 0;
    height: 3px;
    background: #2a70c8;
}
.current-app { background: #f5f0ed; }
.current-app.running::after { left: 0; right: 0; }
.cortana {
    width: 19px;
    height: 19px;
    border: 3px solid #111;
    border-radius: 50%;
}
.ticon { width: 22px; height: 22px; }
.ticon.taskview { margin-left: -6px; }
.ticon.large { width: 31px; height: 31px; }
.tile-l {
    width: 30px;
    height: 30px;
    background: #22aedb;
    color: #fff;
    font: bold 24px/30px "Liberation Sans", sans-serif;
    text-align: center;
    box-shadow: inset 7px 0 0 -3px #13508f;
}
.badge {
    position: absolute;
    left: 32px;
    top: 23px;
    width: 20px;
    height: 20px;
    border-radius: 50%;
    background: #f00;
    color: #fff;
    font-size: 13px;
    line-height: 20px;
    text-align: center;
}
.meter {
    margin-left: 65px;
    width: 62px;
    height: 26px;
    background: #fff;
    padding: 3px;
    display: flex;
    flex: none;
    font-size: 18px;
    line-height: 20px;
    color: #fff;
}
.meter-fill {
    width: 29px;
    background: #14964a;
    text-align: right;
}
.meter-rest {
    width: 27px;
    background: #000;
}
.weather { width: 30px; height: 30px; margin-left: 56px; flex: none; }
.temp { margin-left: 10px; font-size: 18px; color: #222; }
.tray {
    position: absolute;
    left: 1506px;
    top: 0;
    height: 49px;
    display: flex;
    align-items: center;
}
.tray-cell {
    width: 30px;
    display: flex;
    justify-content: center;
}
.tray-cell svg {
    width: 20px;
    height: 20px;
    fill: none;
    stroke: #222;
    stroke-width: 1.3;
}
.tray .solid { fill: #333; stroke: none; }
.tray .grey { fill: #888; stroke: #eee; stroke-width: 1; }
.tray .green { fill: #178a3c; stroke: #eee; stroke-width: 1; }
.tray .white { fill: #fff; stroke: none; }
.lang { width: 46px; text-align: center; font-size: 14px; color: #222; }
.clock {
    width: 92px;
    text-align: center;
    font-size: 14px;
    line-height: 21px;
    color: #222;
    margin: -3px 0 0 -3px;
}
.notif {
    width: 50px;
    height: 30px;
    position: relative;
}
.notif svg { width: 26px; height: 26px; position: absolute; left: 12px; top: 0; }
.tray .notif .white-line { fill: none; stroke: #fff; stroke-width: 1.5; }
.notif i {
    position: absolute;
    left: 24px;
    top: 12px;
    width: 20px;
    height: 20px;
    border: 2px solid #777;
    border-radius: 50%;
    background: #ddd;
    font-style: normal;
    font-size: 14px;
    line-height: 16px;
    text-align: center;
    color: #111;
}
```
